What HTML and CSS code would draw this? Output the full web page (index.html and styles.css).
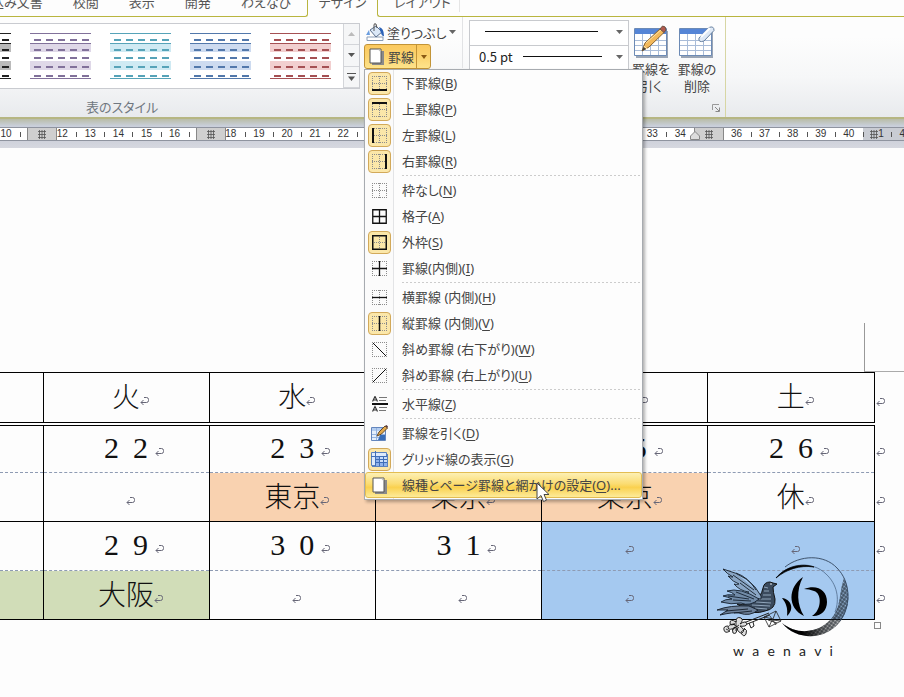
FILE: index.html
```html
<!DOCTYPE html>
<html lang="ja">
<head>
    <meta charset="UTF-8">
    <meta name="viewport" content="width=device-width, initial-scale=1.0">
    <title>罫線</title>
    <link rel="stylesheet" href="styles.css">
</head>
<body>
    <svg class="defs" aria-hidden="true">
        <symbol id="dots" viewBox="0 0 15 15"><path d="M.5 0v15M14.5 0v15M0 .5h15M0 14.5h15M7.5 0v15M0 7.5h15" fill="none" stroke="#8c8c8c" stroke-dasharray="1 1"/></symbol>
        <symbol id="box" viewBox="0 0 15 15"><path d="M.5 0v15M14.5 0v15M0 .5h15M0 14.5h15" fill="none" stroke="#8c8c8c" stroke-dasharray="1 1"/></symbol>
        <symbol id="mark" viewBox="0 0 9 9"><path d="M4 .5h2.500Q8.500.5 8.500 2.500V3.500Q8.500 5.500 6.500 5.500H1M3.500 3L1 5.500 3.500 8" fill="none" stroke="currentColor"/></symbol>
        <symbol id="page" viewBox="0 0 15 17"><path d="M3 3h12v14H3z" fill="#8a8a8a"/><path d="M1 1h11v14H1z" fill="#fff" stroke="#555"/><path d="M9 1.500h2.500V4z" fill="#bbb"/></symbol>
        <symbol id="table" viewBox="0 0 34 30">
            <path d="M2 3h32v27H2z" fill="#9aa5b5"/>
            <path d="M.5.5h32v27H.5z" fill="#fff" stroke="#6c8ab5"/>
            <path d="M1 1h31v5H1z" fill="#5585d6"/>
            <path d="M1 12.500h31M1 17.500h31M1 22.500h31M8.500 6v21M16.500 6v21M24.500 6v21" stroke="#a9bcd8"/>
        </symbol>
        <symbol id="hash" viewBox="0 0 8 9"><path d="M1.500 0v9M4 0v9M6.500 0v9M0 1.500h8M0 4.500h8M0 7.500h8" stroke="#555" stroke-width=".8"/></symbol>
    </svg>

    <!-- Tabs -->
    <nav class="tabs">
        <div class="tabs-main">
            <button class="tab">差し込み文書</button>
            <button class="tab">校閲</button>
            <button class="tab">表示</button>
            <button class="tab">開発</button>
            <button class="tab">わえなび</button>
        </div>
        <button class="tab active">デザイン</button>
        <div class="tabs-rest"><button class="tab">レイアウト</button></div>
    </nav>

    <!-- Ribbon -->
    <div class="ribbon">
        <div class="group styles-group">
            <div class="gallery">
                <div class="thumbs">
                    <div class="thumb black"><i></i><i></i><i></i><i></i><i></i></div>
                    <div class="thumb purple"><i></i><i></i><i></i><i></i><i></i></div>
                    <div class="thumb aqua"><i></i><i></i><i></i><i></i><i></i></div>
                    <div class="thumb blue"><i></i><i></i><i></i><i></i><i></i></div>
                    <div class="thumb red"><i></i><i></i><i></i><i></i><i></i></div>
                </div>
                <div class="scroll">
                    <button aria-label="上へ"><svg width="7" height="4"><path d="M0 4l3.500-4L7 4z" fill="#bbb"/></svg></button>
                    <button aria-label="下へ"><svg width="7" height="4"><path d="M0 0h7L3.500 4z" fill="#555"/></svg></button>
                    <button aria-label="その他"><svg width="9" height="8"><path d="M0 .5h9" stroke="#555"/><path d="M1 3.500h7L4.500 8z" fill="#555"/></svg></button>
                </div>
            </div>
            <div class="group-name">表のスタイル</div>
        </div>

        <div class="fills">
            <button class="fill-btn">
                <svg width="19" height="18" viewBox="0 0 19 18">
                    <path d="M1 14h16v3.500H1z" fill="#fff" stroke="#8a9cb5"/>
                    <path d="M4 7l6-4 6 6-6 5z" fill="#dbe8f7" stroke="#5b6f8c"/>
                    <path d="M8 8V2q0-2 2-1l1 4" fill="none" stroke="#555"/>
                    <path d="M13 4q5 1 5 9-2 1-3-3z" fill="#2d63b8"/>
                    <path d="M3 7L0 12h4z" fill="#6b9ee0"/>
                </svg>
                塗りつぶし
                <svg width="7" height="4"><path d="M0 0h7L3.500 4z" fill="#666"/></svg>
            </button>
            <div class="split">
                <button class="split-main"><svg width="15" height="17"><use href="#page"/></svg>罫線</button>
                <button class="split-arrow" aria-label="罫線メニュー"><svg width="6" height="4"><path d="M0 0h6L3 4z" fill="#8a5a14"/></svg></button>

                <!-- Borders menu -->
                <div class="menu">
                    <button class="item"><span class="ico on"><svg width="15" height="15"><use href="#dots"/><path d="M0 14h15" stroke="#111" stroke-width="2"/></svg></span><span>下罫線(<u>B</u>)</span></button>
                    <button class="item"><span class="ico on"><svg width="15" height="15"><use href="#dots"/><path d="M0 1h15" stroke="#111" stroke-width="2"/></svg></span><span>上罫線(<u>P</u>)</span></button>
                    <button class="item"><span class="ico on"><svg width="15" height="15"><use href="#dots"/><path d="M1 0v15" stroke="#111" stroke-width="2"/></svg></span><span>左罫線(<u>L</u>)</span></button>
                    <button class="item"><span class="ico on"><svg width="15" height="15"><use href="#dots"/><path d="M14 0v15" stroke="#111" stroke-width="2"/></svg></span><span>右罫線(<u>R</u>)</span></button>
                    <div class="sep"></div>
                    <button class="item"><span class="ico"><svg width="15" height="15"><use href="#dots"/></svg></span><span>枠なし(<u>N</u>)</span></button>
                    <button class="item"><span class="ico"><svg width="15" height="15"><path d="M.75.75h13.500v13.500H.75zM7.500 1v13M1 7.500h13" fill="none" stroke="#111" stroke-width="1.300"/></svg></span><span>格子(<u>A</u>)</span></button>
                    <button class="item"><span class="ico on"><svg width="15" height="15"><use href="#dots"/><path d="M.75.75h13.500v13.500H.75z" fill="none" stroke="#111" stroke-width="1.500"/></svg></span><span>外枠(<u>S</u>)</span></button>
                    <button class="item"><span class="ico"><svg width="15" height="15"><use href="#box"/><path d="M7.500 0v15M0 7.500h15" stroke="#111" stroke-width="1.300"/></svg></span><span>罫線(内側)(<u>I</u>)</span></button>
                    <div class="sep"></div>
                    <button class="item"><span class="ico"><svg width="15" height="15"><use href="#dots"/><path d="M0 7.500h15" stroke="#111" stroke-width="1.300"/></svg></span><span>横罫線 (内側)(<u>H</u>)</span></button>
                    <button class="item"><span class="ico on"><svg width="15" height="15"><use href="#dots"/><path d="M7.500 0v15" stroke="#111" stroke-width="1.500"/></svg></span><span>縦罫線 (内側)(<u>V</u>)</span></button>
                    <button class="item"><span class="ico"><svg width="15" height="15"><use href="#box"/><path d="M1 1l13 13" stroke="#111"/></svg></span><span>斜め罫線 (右下がり)(<u>W</u>)</span></button>
                    <button class="item"><span class="ico"><svg width="15" height="15"><use href="#box"/><path d="M1 14L14 1" stroke="#111"/></svg></span><span>斜め罫線 (右上がり)(<u>U</u>)</span></button>
                    <div class="sep"></div>
                    <button class="item"><span class="ico"><svg width="16" height="16"><path d="M0 8h16" stroke="#111" stroke-width="2"/><path d="M.5 5.500L3 .5l2.500 5M1.500 4h3M.5 15.500l2.500-5 2.500 5M1.500 14h3" fill="none" stroke="#333" stroke-width="1.200"/><path d="M7 1.500h8M7 4.500h7M7 11.500h8M7 14.500h7" stroke="#777"/></svg></span><span>水平線(<u>Z</u>)</span></button>
                    <div class="sep"></div>
                    <button class="item"><span class="ico"><svg width="17" height="17" viewBox="0 0 17 17"><path d="M.5 2.500h14v13H.5z" fill="#e4effc" stroke="#6486bd"/><path d="M1 3h13v3H1z" fill="#b3cdf0"/><path d="M1 9.500h13M1 12.500h13M5.500 3v12M10.500 3v12" stroke="#94b3df"/><path d="M9 10h5v5H7z" fill="#376db8"/><path d="M6 11l2-4 6-6 2.500 2-6 6z" fill="#e2a94c" stroke="#694b25"/><path d="M14 1l2.500 2 .5-1.500L15.500 0z" fill="#5b3a3a"/></svg></span><span>罫線を引く(<u>D</u>)</span></button>
                    <button class="item"><span class="ico on"><svg width="17" height="16" viewBox="0 0 17 16"><path d="M1 3h16v13H1z" fill="#5a82bf"/><path d="M.5 1.500h15v13H.5z" fill="#dceafb" stroke="#5a82bf"/><path d="M5 5h11v10H5z" fill="#8fb2ea"/><path d="M4.500 0v15M8.500 5v10M12.500 5v10M0 5.500h16M4 8.500h12M4 11.500h12" stroke="#3f6eb8"/><path d="M9 6h3v2H9zM13 6h3v2h-3zM9 9h3v2H9zM13 9h3v2h-3z" fill="#c9ddf8"/></svg></span><span>グリッド線の表示(<u>G</u>)</span></button>
                    <button class="item hover"><span class="ico"><svg width="15" height="17"><use href="#page"/></svg></span><span>線種とページ罫線と網かけの設定(<u>O</u>)...</span></button>
                    <svg class="cursor" width="14" height="21" viewBox="0 0 14 21"><path d="M1 1v16l4-3.500 2.500 6 3-1.300-2.500-5.700h5z" fill="#fff" stroke="#444"/></svg>
                </div>
            </div>
        </div>

        <div class="pens">
            <div class="combo">
                <select aria-label="ペンのスタイル"><option></option></select>
                <span class="line solid"></span>
                <svg class="arrow" width="7" height="4"><path d="M0 0h7L3.500 4z" fill="#666"/></svg>
            </div>
            <div class="combo">
                <select aria-label="ペンの太さ"><option>0.5 pt</option></select>
                <span class="line weight"></span>
                <svg class="arrow" width="7" height="4"><path d="M0 0h7L3.500 4z" fill="#666"/></svg>
            </div>
        </div>

        <div class="draw">
            <button class="big">
                <svg width="34" height="33" viewBox="0 0 34 33"><use href="#table" y="3" width="34" height="30"/><path d="M8 26l3-8L27 3l4 3.500L15 22z" fill="#f3b95c" stroke="#8a6330"/><path d="M10 21l3 3M12 18L28 4" stroke="#fbe3a9"/><path d="M8 26l1.500-4 2.500 2z" fill="#444"/><path d="M26 4l4 3.500 2-2.500q0-4-3.500-4z" fill="#b35a4f" stroke="#6d5548"/></svg>
                <span>罫線を<br>引く</span>
            </button>
            <button class="big">
                <svg width="36" height="33" viewBox="0 0 36 33"><use href="#table" y="3" width="34" height="30"/><path d="M20 13L30 2.500q5-2 5 3L25 16q-6 2-5-3z" fill="#dfe9f6" stroke="#67809f"/><path d="M22 12l9-9" stroke="#fff" stroke-width="2"/></svg>
                <span>罫線の<br>削除</span>
            </button>
            <button class="launcher" aria-label="罫線の詳細"><svg width="8" height="8"><path d="M.5 6V.5H7" fill="none" stroke="#999"/><path d="M3 3l4 4M7.500 3.500v4h-4" fill="none" stroke="#888"/></svg></button>
        </div>
    </div>

    <!-- Ruler, the part under the menu has no numbers -->
    <div class="ruler">
        <div class="ruler-scale">
            <span>10</span><span><b class="colmark"><svg width="8" height="9"><use href="#hash"/></svg></b></span><span>12</span><span>13</span><span>14</span><span>15</span><span>16</span><span><b class="colmark"><svg width="8" height="9"><use href="#hash"/></svg></b></span><span>18</span><span>19</span><span>20</span><span>21</span><span>22</span><span></span><span></span><span></span><span></span><span></span><span></span><span></span><span></span><span></span><span></span><span>33</span><span>34</span><span><b class="colmark indent"><svg width="8" height="9"><use href="#hash"/></svg></b><svg class="stop" width="10" height="9"><path d="M.5 8.500V5L5 .5 9.500 5v3.500z" fill="#ddd" stroke="#888"/></svg></span><span>36</span><span>37</span><span>38</span><span>39</span><span>40</span><span class="out"><svg width="8" height="9"><use href="#hash"/></svg>1</span><span class="out">42</span>
        </div>
    </div>

    <!-- Document -->
    <main class="page">
        <div class="corner"></div>
        <table class="calendar">
            <colgroup><col class="col-edge"><col><col><col><col><col><col class="col-end"></colgroup>
            <tr class="head">
                <th></th>
                <th>火<svg class="mark"><use href="#mark"/></svg></th>
                <th>水<svg class="mark"><use href="#mark"/></svg></th>
                <th>木<svg class="mark"><use href="#mark"/></svg></th>
                <th>金<svg class="mark"><use href="#mark"/></svg></th>
                <th>土<svg class="mark"><use href="#mark"/></svg></th>
                <td class="end"><svg class="mark"><use href="#mark"/></svg></td>
            </tr>
            <tr class="days">
                <td></td>
                <td><span class="day"><b>2</b><b>2</b></span><svg class="mark"><use href="#mark"/></svg></td>
                <td><span class="day"><b>2</b><b>3</b></span><svg class="mark"><use href="#mark"/></svg></td>
                <td><span class="day"><b>2</b><b>4</b></span><svg class="mark"><use href="#mark"/></svg></td>
                <td><span class="day"><b>2</b><b>5</b></span><svg class="mark"><use href="#mark"/></svg></td>
                <td><span class="day"><b>2</b><b>6</b></span><svg class="mark"><use href="#mark"/></svg></td>
                <td class="end"><svg class="mark"><use href="#mark"/></svg></td>
            </tr>
            <tr class="plans">
                <td></td>
                <td><svg class="mark"><use href="#mark"/></svg></td>
                <td class="tokyo">東京<svg class="mark"><use href="#mark"/></svg></td>
                <td class="tokyo">東京<svg class="mark"><use href="#mark"/></svg></td>
                <td class="tokyo">東京<svg class="mark"><use href="#mark"/></svg></td>
                <td>休<svg class="mark"><use href="#mark"/></svg></td>
                <td class="end"><svg class="mark"><use href="#mark"/></svg></td>
            </tr>
            <tr class="days">
                <td></td>
                <td><span class="day"><b>2</b><b>9</b></span><svg class="mark"><use href="#mark"/></svg></td>
                <td><span class="day"><b>3</b><b>0</b></span><svg class="mark"><use href="#mark"/></svg></td>
                <td><span class="day"><b>3</b><b>1</b></span><svg class="mark"><use href="#mark"/></svg></td>
                <td class="selected"><svg class="mark"><use href="#mark"/></svg></td>
                <td class="selected"><svg class="mark"><use href="#mark"/></svg></td>
                <td class="end"><svg class="mark"><use href="#mark"/></svg></td>
            </tr>
            <tr class="plans">
                <td class="osaka"></td>
                <td class="osaka">大阪<svg class="mark"><use href="#mark"/></svg></td>
                <td><svg class="mark"><use href="#mark"/></svg></td>
                <td><svg class="mark"><use href="#mark"/></svg></td>
                <td class="selected"><svg class="mark"><use href="#mark"/></svg></td>
                <td class="selected"></td>
                <td class="end"><svg class="mark"><use href="#mark"/></svg></td>
            </tr>
        </table>
        <div class="handle"></div>

        <!-- Channel logo -->
        <div class="logo">
            <svg width="136" height="84" viewBox="0 0 136 84">
                <defs>
                    <pattern id="hatch" width="3" height="3" patternUnits="userSpaceOnUse" patternTransform="rotate(35)"><path d="M0 1h3M1 0v3" stroke="#1c2530" stroke-width=".8"/></pattern>
                    <linearGradient id="ring" x1="0" x2="1"><stop offset=".3" stop-color="#000"/><stop offset=".65" stop-color="#000" stop-opacity=".35"/><stop offset="1" stop-color="#000" stop-opacity=".05"/></linearGradient>
                </defs>
                <path d="M66 67C82 86 110 83 123 67C134 54 135 36 128 22C123 36 125 48 118 59C107 76 83 81 66 67z" fill="url(#hatch)"/>
                <path d="M66 67C82 86 110 83 123 67C134 54 135 36 128 22C123 36 125 48 118 59C107 76 83 81 66 67z" fill="url(#ring)"/>
                <path d="M69 11C84-1 108-2 121 12C134 25 136 48 124 65" fill="none" stroke="#33465e" stroke-width=".9"/>
                <path d="M60 22C73 6 97 5 110 18C121 28 124 43 119 56" fill="none" stroke="#445d7c" stroke-width=".7"/>
                <path d="M60 22C70 10 86 7 98 11C84 9 71 13 60 22z" stroke="#000" stroke-width=".7"/>
                <path d="M87 21C72 31 71 52 88 60C81 49 80 34 87 21z"/>
                <path d="M88 33C101 28 111 34 111 46C111 55 104 61 96 60C106 54 106 37 98 35Q93 33 88 33z"/>
                <path d="M66 42C75 43 79 53 71 60C72 52 70 47 66 42z"/>
                <!-- dove -->
                <path d="M47 32Q48 26 54 26L57 27 61 28 57 31Q57 36 59 43Q60 53 49 55Q38 59 29 53L21 48Q33 50 38 43Q45 42 47 32z" fill="#3a4a5d" stroke="#111"/>
                <path d="M48 31l4 1M48 35l5 0M47 39l8 0M43 43l12 0M40 46l15 1M36 49l18 1M39 52l12 1" stroke="#b5cbe2" stroke-width=".7"/>
                <circle cx="55" cy="28" r=".8" fill="#fff"/>
                <path d="M45 40Q35 20 7 13Q11 18 17 21Q14 21 12 20Q17 26 23 28Q20 29 18 28Q24 35 33 36Q31 38 28 37Q34 42 45 43zM17 19L38 34M24 27L40 39M20 17Q32 21 40 34" fill="#8aa6c5" stroke="#19232e" stroke-width=".9"/>
                <path d="M43 43Q24 31 11 35Q16 36 19 39Q11 38 7 40Q12 41 16 43Q9 43 5 46Q15 49 25 47Q34 51 43 43zM12 40L33 43M17 44L35 45M20 36L38 43" fill="#718ba8" stroke="#152130" stroke-width=".9"/>
                <path d="M33 50Q14 49 1 54L12 54 4 59Q17 56 23 57Q34 61 42 54zM10 55L32 53M18 57L36 55" fill="#6d819a" stroke="#141d28" stroke-width=".9"/>
                <!-- key, card and flowers -->
                <path d="M25 68L53 57M26 70L54 59M33 67l2 5 3-2-1-4" fill="none" stroke="#222"/>
                <path d="M48 61l12-6 5 10-12 6zM48 61l9 2 3-8M53 71l3-7 9 1M52 64l9 3M54 60l6 9" fill="none" stroke="#222" stroke-width=".8"/>
                <path d="M20 66q-6-4-6 1 0 3 5 1-7 0-7 4 2 3 7-1-4 3-2 6 4 2 4-5 1 5 5 5 4-3-2-7 6 1 7-2-1-4-7 0 4-4 1-6-5-2-5 4zM12 70q-5 0-4 4t6 1M28 72q4 2 2 6t-5-1" fill="#ddd" stroke="#111" stroke-width=".9"/>
                <path d="M17 68l6 4M16 74l7-5M20 65v10M10 73l4 2M25 76l4-3" stroke="#111" stroke-width=".8"/>
            </svg>
            <div class="logo-name"><span>w</span><span>a</span><span>e</span><span>n</span><span>a</span><span>v</span><span>i</span></div>
        </div>
    </main>
</body>
</html>
```
FILE: styles.css
```css
* {
    box-sizing: border-box;
}
body {
    margin: 0;
    min-height: 100vh;
    overflow: hidden;
    display: flex;
    flex-direction: column;
    background: #fdfdfd;
    color: #444;
    font-family: "Noto Sans CJK JP", sans-serif;
    font-size: 13px;
    font-feature-settings: "palt";
}
button, select {
    font: inherit;
    font-feature-settings: inherit;
    color: inherit;
    background: none;
    border: 0;
    padding: 0;
    margin: 0;
    white-space: nowrap;
}
svg {
    flex: none;
    display: block;
}
.defs {
    position: absolute;
    width: 0;
    height: 0;
}

/* tabs */
.tabs {
    display: flex;
    height: 17px;
}
.tabs-main {
    display: flex;
    justify-content: flex-end;
    gap: 30px;
    width: 308px;
    padding-right: 16px;
    border-right: 1px solid #b9b53f;
    border-bottom: 1px solid #b9b53f;
    border-bottom-right-radius: 3px;
}
.tab {
    height: 20px;
    margin-top: -8px;
    line-height: 20px;
    color: #555;
}
.active {
    width: 69px;
}
.tabs-rest {
    flex: 1;
    display: flex;
    padding-left: 16px;
    border-left: 1px solid #b9b53f;
    border-bottom: 1px solid #b9b53f;
    border-bottom-left-radius: 3px;
}
.tabs-rest .tab {
    padding-right: 8px;
    border-right: 1px solid #e5e5e5;
}

/* ribbon */
.ribbon {
    display: flex;
    align-items: flex-start;
    height: 102px;
    background: linear-gradient(#fdfdfd 20%, #f6f7f8 60%, #e8eaed);
    border-bottom: 2px solid #b6b683;
}
.styles-group {
    width: 360px;
    padding-top: 6px;
}
.gallery {
    display: flex;
    height: 66px;
    background: #fff;
    border: 1px solid #c9cbd0;
    border-left: 0;
}
.thumbs {
    flex: 1;
    display: flex;
    justify-content: flex-end;
    gap: 19px;
    padding: 9px 12px 0 0;
    overflow: hidden;
}
.thumb {
    flex: none;
    width: 61px;
    height: 46px;
    border-top: 1px solid var(--line);
    border-bottom: 1px solid var(--line);
}
.thumb i {
    display: block;
    height: 9px;
    padding: 5px 0 0 4px;
}
.thumb i::before {
    content: "";
    display: block;
    height: 2px;
    background: repeating-linear-gradient(90deg, var(--line) 0 7px, transparent 7px 12px);
}
.thumb i:nth-child(even) {
    background: var(--band);
}
.thumb i:nth-child(2) {
    border-top: 1px solid var(--line);
}
.black { --line: #222; --band: #bbb; }
.purple { --line: #81719a; --band: #dfd8e8; }
.aqua { --line: #56a3b8; --band: #cfeaf3; }
.blue { --line: #5278ab; --band: #cddbf0; }
.red { --line: #a55053; --band: #f2cfcf; }
.scroll {
    display: flex;
    flex-direction: column;
    width: 16px;
    background: #f5f6f7;
}
.scroll button {
    flex: 1;
    display: grid;
    place-items: center;
    border-left: 1px solid #d3d5d9;
    border-bottom: 1px solid #d3d5d9;
}
.group-name {
    padding: 8px 0 0 86px;
    line-height: 20px;
    color: #707780;
}
.fills {
    width: 103px;
    height: 51px;
    padding: 3px 0 0 4px;
    border-right: 1px solid #e2e3e5;
}
.fill-btn {
    display: flex;
    align-items: center;
    gap: 2px;
    height: 24px;
    padding-left: 2px;
}
.split {
    position: relative;
    display: flex;
    width: 67px;
    height: 25px;
    border: 1px solid #c29437;
    border-radius: 3px;
    background: linear-gradient(#fbc95e, #fbd36f 50%, #fee48b);
}
.split-main {
    display: flex;
    flex: 1;
    align-items: center;
    gap: 4px;
    padding-left: 4px;
}
.split-arrow {
    display: grid;
    place-items: center;
    width: 14px;
    border-left: 1px solid #c29437;
}
.pens {
    width: 160px;
    margin: 3px 0 0 6px;
    border: 1px solid #c8cace;
    background: #fff;
}
.combo {
    display: grid;
    align-items: center;
    height: 24px;
    color: #222;
}
.combo + .combo {
    border-top: 1px solid #c8cace;
}
.combo > * {
    grid-area: 1 / 1;
}
.combo select {
    appearance: none;
    width: 100%;
    height: 23px;
    padding: 0 0 3px 9px;
}
.combo .arrow {
    justify-self: end;
    margin: 0 5px 2px 0;
}
.line {
    height: 1px;
    background: #111;
    pointer-events: none;
}
.solid {
    margin: 0 30px 4px 15px;
}
.weight {
    margin: 0 26px 3px 53px;
}
.draw {
    position: relative;
    display: flex;
    gap: 6px;
    height: 100px;
    padding: 8px 8px 0 2px;
    border-right: 1px solid #d7d6a4;
}
.big {
    display: flex;
    flex-direction: column;
    align-items: center;
    gap: 2px;
    width: 40px;
    height: 76px;
    line-height: 17px;
}
.launcher {
    position: absolute;
    right: 5px;
    bottom: 5px;
}

/* borders menu */
.menu {
    position: absolute;
    z-index: 2;
    top: 24px;
    left: -1px;
    width: 279px;
    padding-bottom: 1px;
    border: 1px solid #a7abb0;
    background: linear-gradient(90deg, #fbfbfb 28px, #e3e4e6 28px, #e3e4e6 29px, #fdfdfd 29px);
    box-shadow: 2px 2px 3px rgba(0, 0, 0, 0.3);
    font-family: "Noto Sans", "Noto Sans CJK JP", sans-serif;
}
.item {
    display: flex;
    align-items: center;
    width: 100%;
    height: 26px;
    padding-left: 2px;
    gap: 11px;
    border: 1px solid transparent;
    border-radius: 3px;
    text-align: left;
}
.item > span:last-child {
    padding-bottom: 2px;
}
.item u {
    text-underline-offset: 2px;
}
.ico {
    display: grid;
    place-items: center;
    width: 23px;
    height: 23px;
    border: 1px solid transparent;
    border-radius: 4px;
}
.on {
    border-color: #d2a95a;
    background: #fbe7a9;
}
.sep {
    height: 3px;
    margin-left: 37px;
    background: repeating-linear-gradient(90deg, #ccc 0 2px, transparent 2px 4px) 0 1px / 100% 1px no-repeat;
}
.hover {
    border-color: #e3bd52;
    background: linear-gradient(#fdf0b4, #fbdc72 45%, #fad14f 60%, #fdeb9a);
}
.cursor {
    position: absolute;
    right: 92px;
    bottom: -4px;
}

/* ruler */
.ruler {
    height: 29px;
    padding-top: 8px;
    overflow: hidden;
    background: linear-gradient(#b9bda8, #c9cfdb 7px, #cdd0da 20px, #d6d8df);
}
.ruler-scale {
    display: flex;
    height: 14px;
    margin: 0 -16px 0 -9px;
    border: 1px solid #8f949f;
    background: #fff;
    font: 10px/12px "Liberation Sans", sans-serif;
    color: #333;
}
.ruler-scale span {
    position: relative;
    flex: 1 1 0;
    text-align: center;
}
.ruler-scale span::before {
    content: "";
    position: absolute;
    left: 0;
    top: 4px;
    height: 5px;
    border-left: 1px solid #555;
}
.colmark {
    position: absolute;
    z-index: 1;
    left: 7px;
    top: 0;
    display: grid;
    place-items: center;
    width: 30px;
    height: 12px;
    border: solid #888;
    border-width: 0 1px;
    background: #cfcfcf;
}
.indent {
    left: 0;
}
.stop {
    position: absolute;
    z-index: 2;
    left: -4px;
    bottom: 0;
}
.ruler-scale .out {
    display: flex;
    align-items: center;
    justify-content: center;
    background: #c9ccd3;
}

/* document */
.page {
    position: relative;
    flex: 1;
    padding-top: 175px;
}
.corner {
    width: 40px;
    height: 49px;
    margin-left: auto;
    border-left: 1px solid #999;
    border-bottom: 1px solid #aaa;
}
.calendar {
    width: 100%;
    table-layout: fixed;
    border-collapse: collapse;
    color: #111;
    font-size: 28px;
    font-weight: 300;
    line-height: 40px;
    text-align: center;
}
.col-edge {
    width: 43px;
}
.col-end {
    width: 30px;
}
.calendar th, .calendar td {
    height: 49px;
    padding: 0 0 4px;
    border: 1px solid #000;
    font-weight: 300;
    white-space: nowrap;
}
.calendar .head th {
    height: 51px;
    border-bottom: 4px double #000;
}
.calendar .days td {
    border-bottom: 1px dashed #8e9bb3;
}
.calendar .plans td {
    border-top: 1px dashed #8e9bb3;
}
.calendar tr > :first-child {
    border-left: 0;
}
.calendar tr td.end {
    padding-left: 1px;
    border-width: 0 0 0 1px;
    text-align: left;
}
.day {
    display: inline-flex;
    gap: 14px;
    font-family: "Liberation Serif", serif;
    font-size: 30px;
}
.day b {
    font-weight: 400;
}
.mark {
    display: inline-block;
    width: 9px;
    height: 9px;
    margin-right: -9px;
    vertical-align: 1px;
    color: #667;
}
.day + .mark {
    margin: 0 -16px 0 7px;
}
.tokyo {
    background: #f9d2b0;
}
.osaka {
    background: #d1ddb8;
}
.selected {
    background: #a5c9f0;
}
.handle {
    width: 7px;
    height: 7px;
    margin: 2px 23px 0 auto;
    border: 1px solid #888;
}
.logo {
    position: absolute;
    top: 408px;
    right: 52px;
}
.logo-name {
    display: flex;
    justify-content: space-between;
    width: 100px;
    margin-left: 17px;
    font: 14px/22px Lato, sans-serif;
    color: #222;
}
```
